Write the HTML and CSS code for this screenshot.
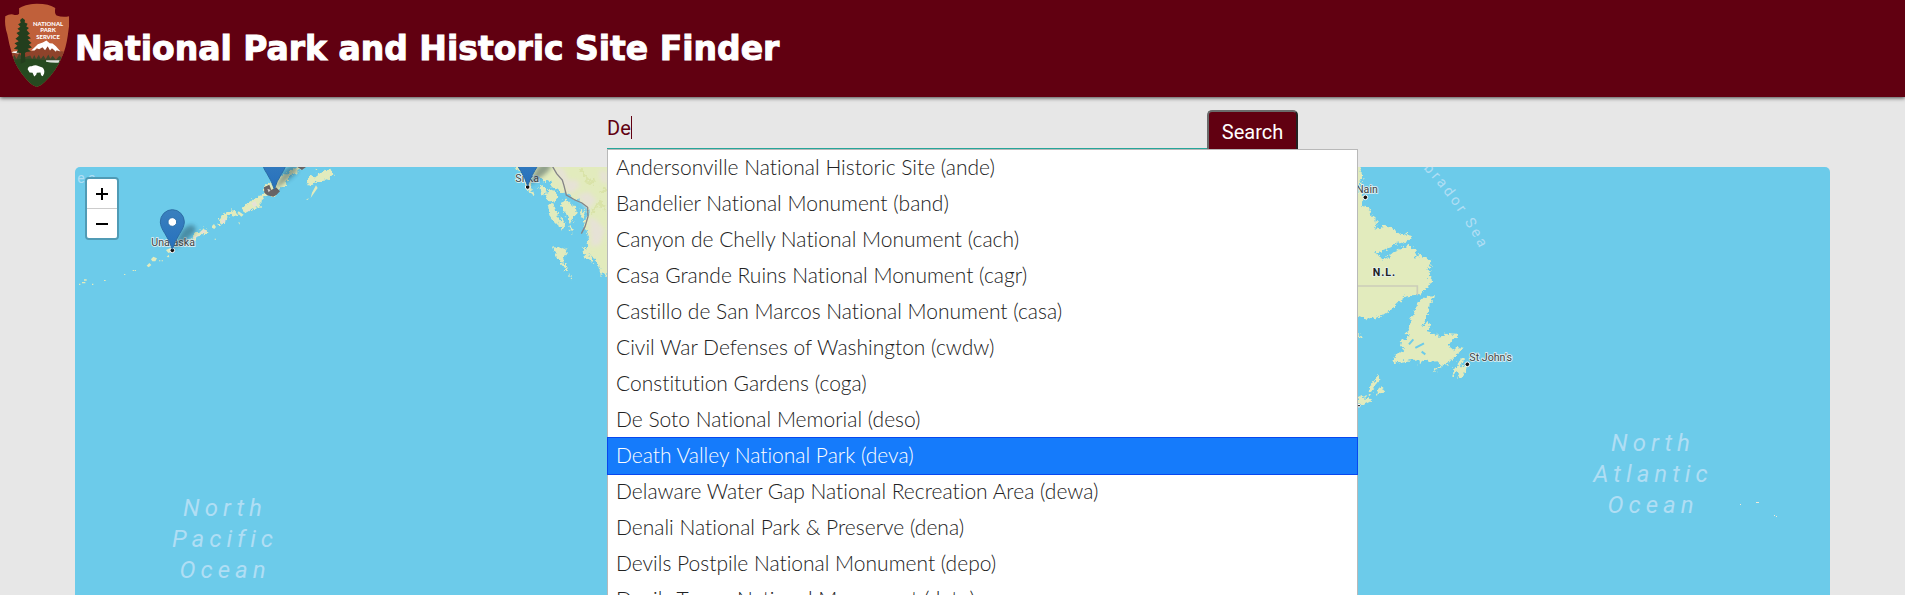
FILE: index.html
```html
<!DOCTYPE html>
<html lang="en">
<head>
<meta charset="utf-8">
<title>National Park and Historic Site Finder</title>
<link rel="stylesheet" href="styles.css">
</head>
<body>
<header class="site-header">
  <svg class="logo" viewBox="0 0 228 288" role="img" aria-label="National Park Service">
    <defs>
      <clipPath id="arrowhead"><path d="M58 22Q72 10 112 7Q150 8 168 21Q165 38 172 44Q190 50 210 46Q212 75 206 105Q200 145 190 165Q172 212 136 246Q124 259 112 261Q98 258 82 240Q50 205 38 165Q27 130 22 100Q13 75 16 46Q32 37 44 42Q54 44 58 38Z"/></clipPath>
    </defs>
    <g clip-path="url(#arrowhead)">
      <path fill="#c0603a" d="M0 0h228v288H0z"/>
      <path fill="#8f432b" d="M0 160L40 155L95 152L120 143L140 138L175 150L228 160V200H0z"/>
      <path fill="#fff" d="M95 150L108 138L115 131L130 126L141 120L151 128L160 129L170 137L184 153L172 149L170 154L158 143L152 150L145 137L137 149L129 140L119 146L112 143L105 150Z"/>
      <path fill="#fff" d="M34 156Q44 150 58 153L56 159Z"/>
      <path fill="#3f482b" d="M35 178L44 164L50 175L58 160L70 172L92 165L98 177L104 164L110 176L118 163L124 176L132 165L139 177L147 162L153 175L160 166L170 178L180 167L200 178V195H30Z"/>
      <path fill="#264a20" d="M25 182Q80 170 122 178Q165 184 200 182V288H25Z"/>
      <path fill="#dfe5df" d="M140 180Q158 179 181 180L178 187Q155 188 140 184Z"/>
      <path fill="#233e1d" d="M61 57L68 51L76 57L75 65L84 69L80 77L88 82L81 88L91 99L83 104L94 113L84 117L96 127L88 132L97 141L84 145L94 153L80 155L76 158L77 184L63 190L64 158L50 157L55 148L42 145L53 136L44 128L57 122L47 114L58 105L50 97L61 91L53 84L62 78L55 70L63 66Z"/>
      <path fill="#fff" d="M84 207Q86 196 96 198Q108 193 116 197L129 202Q137 210 134 220L130 228L125 225L123 217L112 218L110 224L104 229L99 218L90 217Z"/>
    </g>
    <g class="logo-text"><text x="146" y="76">NATIONAL</text><text x="146" y="95">PARK</text><text x="146" y="114">SERVICE</text></g>
  </svg>
  <h1 class="site-title">National Park and Historic Site Finder</h1>
</header>
<main class="content">
  <form class="search">
    <input class="search-input" type="text" value="De" aria-label="Park name" autocomplete="off">
    <span class="caret"></span>
    <button class="search-button" type="button">Search</button>
    <ul class="suggestions" role="listbox" aria-label="Suggestions">
      <li role="option">Andersonville National Historic Site (ande)</li>
      <li role="option">Bandelier National Monument (band)</li>
      <li role="option">Canyon de Chelly National Monument (cach)</li>
      <li role="option">Casa Grande Ruins National Monument (cagr)</li>
      <li role="option">Castillo de San Marcos National Monument (casa)</li>
      <li role="option">Civil War Defenses of Washington (cwdw)</li>
      <li role="option">Constitution Gardens (coga)</li>
      <li role="option">De Soto National Memorial (deso)</li>
      <li role="option" class="active" aria-selected="true">Death Valley National Park (deva)</li>
      <li role="option">Delaware Water Gap National Recreation Area (dewa)</li>
      <li role="option">Denali National Park &amp; Preserve (dena)</li>
      <li role="option">Devils Postpile National Monument (depo)</li>
      <li role="option">Devils Tower National Monument (deto)</li>
    </ul>
  </form>
  <section class="map" aria-label="Map">
    <svg class="map-canvas" viewBox="75 167 1755 428" preserveAspectRatio="xMidYMin slice">
      <defs>
        <filter id="coast" x="-5%" y="-5%" width="110%" height="110%"><feTurbulence type="fractalNoise" baseFrequency=".09" numOctaves="3" seed="4"/><feDisplacementMap in="SourceGraphic" scale="22" xChannelSelector="R" yChannelSelector="G"/></filter>
        <filter id="soft" x="-50%" y="-50%" width="200%" height="200%"><feGaussianBlur stdDeviation="6"/></filter>
        <linearGradient id="pinfill" x1="0" y1="0" x2="0" y2="1"><stop offset="0" stop-color="#3a80be"/><stop offset="1" stop-color="#2670bd"/></linearGradient>
        <g id="pin">
          <path d="M0 0L14 -30Q36 -80 62 -74Q82 -62 52 -38Z" fill="#12303f" opacity=".4" filter="url(#soft)"/>
          <path d="M0 -2Q-7 -26 -22 -49Q-36 -70 -36 -84A36 37 0 0 1 36 -84Q36 -70 22 -49Q7 -26 0 -2Z" fill="url(#pinfill)" stroke="#2c6ca5" stroke-width="3"/>
          <circle cy="-84" r="13" fill="#fff" stroke="#2d70ab" stroke-width="3"/>
        </g>
      </defs>
      <g transform="translate(60 150) scale(.3333)">
        <g class="land" filter="url(#coast)">
          <path d="M546 178L557 164L574 154L590 143L608 137L610 115L620 105L645 95L660 80L672 72L690 64L710 50L736 45L731 58L716 64L708 72L692 74L680 92L683 102L666 110L650 125L638 138L618 140L606 148L604 162L590 175L578 178L568 184L552 188Z"/>
          <path d="M474 216L481 200L490 190L504 185L520 181L531 188L528 198L515 195L503 200L498 212L488 222L478 224Z"/>
          <path d="M395 264L406 252L424 244L428 235L440 236L442 248L430 256L416 255L406 265L397 270Z"/>
          <path d="M741 94L747 78L757 75L764 83L772 77L785 68L791 59L799 63L813 56L819 70L822 76L810 80L809 91L796 87L788 95L777 94L763 100L757 104L744 102ZM767 56L774 61L768 64Z"/>
        </g>
        <g class="land">
          <path d="M532 189L536 184L551 194L544 200L538 194ZM456 228L462 222L468 231L463 237L456 233ZM535 216L540 218L538 224ZM768 106L773 114L764 127L752 144L756 128ZM738 150L746 144L744 149Z"/>
          <path d="M273 328L280 320L291 325L286 334L277 334ZM260 347L268 339L274 345L266 352ZM318 300L333 293L340 304L325 309ZM320 321L326 314L328 322Z"/>
          <path d="M57 401h4v4h-4zM66 396h10v4h-10zM72 388h8v4h-8zM96 401h4v4h-4zM132 390h5v3h-5zM192 372h4v3h-4zM218 360h4v3h-4zM224 360h4v3h-4zM297 331h4v3h-4zM305 331h4v3h-4zM464 266h4v3h-4z"/>
        </g>
        <path class="peak" d="M554 183L573 176L569 184ZM574 160L586 153L592 166L582 172ZM483 211L497 203L496 215L486 222ZM399 262L423 251L419 255L402 266ZM422 244L437 239L438 246L426 251Z"/>
        <path d="M612 112L628 104L634 120L648 112L660 124L650 134L640 140L622 136L613 128ZM712 51H738L726 60Z" fill="#686466"/>
        <path d="M622 116L632 120L626 127Z" fill="#d6d4d6"/>
        <text class="sea straight" x="52" y="98" font-size="42" letter-spacing="10">ea</text>
        <text class="town" x="274" y="288">Unalaska</text>
        <circle class="dot" cx="337" cy="301" r="7"/>
        <use href="#pin" x="337" y="300"/>
        <use href="#pin" x="643" y="120"/>
      </g>
      <g transform="translate(480 100) scale(.3333)">
        <g class="land" filter="url(#coast)">
          <path d="M105 195H400V530L375 515L362 525L350 480L335 465L320 455L318 440L328 410L318 395L310 365L325 345L321 325L298 300L280 297L260 275L242 282L230 262L217 262L208 238L190 245L182 228L160 228L150 255L160 280L157 292L148 272L137 264L133 235L120 223Z"/>
          <path d="M178 260L190 258L200 278L194 287L183 282ZM205 270L227 275L232 292L223 305L205 301L197 285ZM204 315L220 310L231 338L240 365L231 373L215 355L208 346ZM240 305L258 298L275 316L288 318L290 345L279 355L273 373L258 344L249 327ZM302 325L318 340L309 360L301 346ZM243 350L254 372L247 395L237 375ZM270 374L281 388L276 399L266 388Z"/>
          <path d="M219 440L233 438L248 450L264 440L258 461L250 473L251 490L240 485L228 465ZM244 492L256 492L264 512L258 514ZM266 520L276 541L270 537ZM305 440L318 450L339 475L342 490L327 481L310 462ZM350 485L364 480L374 503L381 516L376 530L362 512Z"/>
        </g>
        <g class="peak" filter="url(#soft)"><path d="M220 200L250 205L265 240L290 240L300 258L278 280L262 277L235 225ZM290 285L325 275L350 300L325 330ZM325 350L350 360L375 390L360 435L335 440ZM358 210L382 215V255L360 240Z"/></g>
        <g fill="none" stroke="#d5df9e" stroke-width="8" opacity=".65" filter="url(#coast)"><path d="M300 205L330 250L350 235M335 340L360 305L375 330M360 280L382 265"/></g>
        <path d="M218 200L230 221L247 240L252 257L259 285L285 300L306 309L323 322L324 350L315 380L304 401" fill="none" stroke="#858487" stroke-width="4"/>
        <text class="town" x="106" y="245">Sitka</text>
        <circle class="dot" cx="143" cy="261" r="7"/>
        <use href="#pin" x="143" y="260"/>
      </g>
      <g transform="translate(1340 220) scale(.3333)">
        <g class="land" filter="url(#coast)">
          <path d="M40 -170H56L60 -145L74 -130L62 -127L68 -105L55 -105L72 -72L67 -46L97 -30L92 -18L109 -2L112 18L103 25L120 28L134 18L155 23L178 40L217 48L214 56L188 68L165 72L147 83L128 89L120 96L101 97L118 105L120 120L145 110L160 97L187 84L204 77L220 82L228 96L223 114L236 105L255 111L274 122L273 138L262 150L273 158L266 170L276 182L262 203L240 224L217 226L193 232L176 245L151 272L130 286L97 293L77 298L54 290H40Z"/>
          <path d="M247 238L262 227L284 226L276 239L279 247L266 259L263 285L252 305L246 322L264 309L276 316L258 333L279 338L293 350L312 347L324 339L350 341L351 350L337 358L326 377L341 391L352 381L368 383L355 397L347 412L336 417L327 428L318 433L301 440L293 450L276 462L281 453L304 433L296 424L267 425L256 417L236 432L239 418L220 420L205 422L182 425L163 430L157 416L170 404L190 388L199 381L180 382L183 363L196 359L210 343L194 342L205 329L214 300L226 270L233 246Z"/>
          <path d="M336 468L344 445L355 430L363 412L369 416L363 437L374 440L380 436L378 455L369 473L352 474L358 455ZM82 520L92 496L102 481L116 461L118 481L103 498L94 523ZM116 505L129 501L133 512L108 528ZM45 548L53 532L65 525L70 534L86 531L90 545L74 553L54 557ZM52 341L72 350L58 356Z"/>
        </g>
        <path d="M207 373L220 358M226 384L252 370M245 395L256 403" fill="none" stroke="#6ccbea" stroke-width="6"/>
        <path d="M54 198H232V226" fill="none" stroke="#cbcdb9" stroke-width="5"/>
        <text class="province" x="98" y="167">N.L.</text>
        <text class="town" x="388" y="424">St John's</text>
        <circle class="dot" cx="382" cy="433" r="7"/>
        <circle class="dot" cx="57" cy="557" r="4"/>
        <text class="town" x="48" y="-82">Nain</text>
        <circle class="dot" cx="76" cy="-68" r="7"/>
        <path id="labrador" d="M110 -285Q320 -115 422 92" fill="none"/>
        <text class="sea straight" font-size="44" letter-spacing="9" text-anchor="end"><textPath href="#labrador" startOffset="100%">Labrador Sea</textPath></text>
      </g>
      <g class="sea ocean">
        <text x="225" y="516">North</text><text x="225" y="547">Pacific</text><text x="225" y="578">Ocean</text>
        <text x="1653" y="451">North</text><text x="1653" y="482">Atlantic</text><text x="1653" y="513">Ocean</text>
      </g>
      <path d="M1740 504h1v1h-1zM1756 502h3v1h-3zM1774 515h1v1h-1zM1776 516h1v1h-1z" fill="#f4ead8"/>
    </svg>
    <div class="zoom">
      <button type="button" aria-label="Zoom in"><svg viewBox="0 0 12 12"><path d="M0 6H12M6 0V12"/></svg></button>
      <button type="button" aria-label="Zoom out"><svg viewBox="0 0 12 12"><path d="M0 6H12"/></svg></button>
    </div>
  </section>
</main>
</body>
</html>
```
FILE: styles.css
```css
* { box-sizing: border-box; }

body {
  margin: 0;
  height: 100vh;
  display: flex;
  flex-direction: column;
  overflow: hidden;
  background: #e7e7e7;
  font-family: Roboto, sans-serif;
}

.site-header {
  display: flex;
  align-items: center;
  background: #610011;
  box-shadow: 0 1px 4px rgba(0, 0, 0, .7);
}

.logo { width: 75px; height: 97px; flex: none; }

.logo-text {
  fill: #fff;
  font: 900 18px Lato, sans-serif;
  text-anchor: middle;
}

.site-title {
  margin: 0;
  color: #fff;
  font: bold 33px/44px "DejaVu Sans", sans-serif;
  -webkit-text-stroke: 1px #fff;
}

.content {
  flex: 1;
  display: flex;
  flex-direction: column;
  padding: 0 75px;
}

.search {
  position: relative;
  z-index: 2;
  display: flex;
  align-items: flex-start;
  width: 100%;
  max-width: 691px;
  height: 70px;
  margin: 0 auto;
  padding-top: 8px;
}

.search-input {
  flex: 1;
  min-width: 0;
  height: 44px;
  padding: 2px 0 0;
  border: 0;
  border-bottom: 1px solid #26a69a;
  outline: 0;
  background: transparent;
  color: #610011;
  font: 20px Roboto, sans-serif;
}

.caret {
  position: absolute;
  left: 24px;
  top: 19px;
  width: 1px;
  height: 23px;
  background: #610011;
}

.search-button {
  height: 44px;
  width: 91px;
  margin-top: 5px;
  padding: 0;
  border: 2px solid;
  border-color: #6b6b6b #222 #222 #6b6b6b;
  border-radius: 5px;
  background: #610011;
  color: #fff;
  font: 20px Roboto, sans-serif;
}

.suggestions {
  position: absolute;
  top: 52px;
  left: 0;
  width: 751px;
  margin: 0;
  padding: 0;
  border: 1px solid #b9b9b9;
  background: #fff;
  list-style: none;
  color: #222;
  font: 300 21px/34px Lato, sans-serif;
  font-variant-ligatures: none;
}

.suggestions li { padding: 0 8px 2px; }

.suggestions .active {
  background: #157bfb;
  box-shadow: 0 0 0 1px #0848ef;
  color: #fff;
}

.map {
  position: relative;
  flex: 1;
  min-height: 0;
  overflow: hidden;
  border-radius: 5px 5px 0 0;
  background: #6ccbea;
}

.map-canvas { display: block; width: 100%; height: 100%; }

.land { fill: #e2ebbd; }
.peak { fill: #e6e2d6; }

.dot { fill: #111; stroke: #fff; stroke-width: 3px; }

.town, .province {
  fill: #3d4548;
  stroke: #e3f1f2;
  stroke-width: 5px;
  paint-order: stroke;
  font: 32px Roboto, sans-serif;
}

.province { fill: #222; font-weight: 700; letter-spacing: 3px; }

.sea {
  fill: #b0def4;
  font-family: Roboto, sans-serif;
  font-style: italic;
}

.straight { font-style: normal; }

.ocean {
  font-size: 24px;
  letter-spacing: 5px;
  text-anchor: middle;
}

.zoom {
  position: absolute;
  top: 10px;
  left: 10px;
  display: flex;
  flex-direction: column;
  width: 34px;
  border: 2px solid #509bb5;
  border-radius: 4px;
  overflow: hidden;
}

.zoom button {
  display: grid;
  place-items: center;
  height: 29px;
  padding: 0;
  border: 0;
  background: #fff;
}

.zoom button + button { border-top: 1px solid #ccc; height: 30px; }

.zoom svg { width: 12px; height: 12px; }
.zoom path { stroke: #000; stroke-width: 2px; }
```
